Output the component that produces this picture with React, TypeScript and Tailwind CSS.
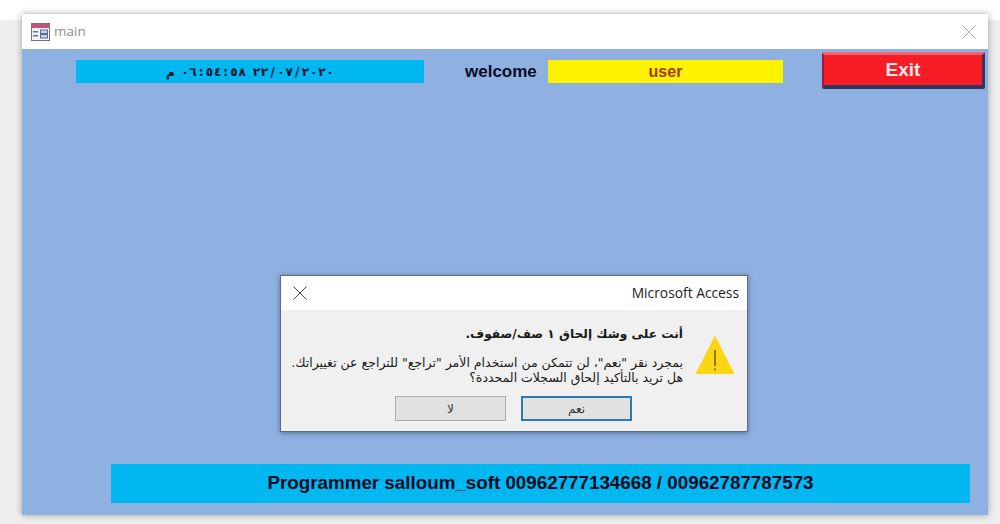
import React from "react";

const FormIcon = () => (
  <svg width="19" height="18" viewBox="0 0 19 18" className="shrink-0">
    <rect x="0.5" y="0.5" width="18" height="17" fill="#f0f2f8" stroke="#70727f" />
    <rect x="1" y="1" width="17" height="4" fill="#c2537c" />
    <rect x="2" y="8" width="5" height="1.5" fill="#68789a" />
    <rect x="2" y="12" width="5" height="1.5" fill="#68789a" />
    <rect x="9.5" y="7" width="7" height="3.5" fill="#c3d3ea" stroke="#5a6a90" strokeWidth="1" />
    <rect x="9.5" y="11.5" width="7" height="3.5" fill="#c3d3ea" stroke="#5a6a90" strokeWidth="1" />
  </svg>
);

const X = ({ size, color }: { size: number; color: string }) => (
  <svg width={size} height={size} viewBox="0 0 14 14" className="shrink-0">
    <path d="M0.5 0.5 L13.5 13.5 M13.5 0.5 L0.5 13.5" stroke={color} strokeWidth="1" fill="none" />
  </svg>
);

const Warning = () => (
  <svg width="40" height="40" viewBox="0 0 40 40" className="shrink-0">
    <path d="M20 0.5 L39.5 39 L0.5 39 Z" fill="#fcd612" />
    <path d="M20 15 L20 31 M20 33.5 L20 35.5" stroke="#4a3d10" strokeWidth="1.2" />
  </svg>
);

const Spaced = ({ text }: { text: string }) => (
  <span className="flex">
    {text.split("").map((c, i) => (
      <span key={i} className="w-[8.2px] text-center">
        {c}
      </span>
    ))}
  </span>
);

export default function App() {
  return (
    <div className="relative h-[524px] w-[1000px] overflow-hidden bg-[#eeeeee] font-['Liberation_Sans',sans-serif]">
      <div className="h-5 bg-white" />
      <div className="absolute left-[22px] top-[14px] flex h-[501px] w-[966px] flex-col shadow-[0_0_7px_rgba(0,0,0,0.35)]">
        <div className="flex h-[35px] shrink-0 items-center bg-white pl-[9px] pr-[12px]">
          <FormIcon />
          <span className="ml-[4px] font-['Open_Sans',sans-serif] text-[13.5px] text-[#909090]">main</span>
          <span className="ml-auto">
            <X size={14} color="#b0b0b0" />
          </span>
        </div>
        <div className="relative flex flex-1 flex-col bg-[#8fb1e1] pb-[12px] pl-[54px] pr-[3px] pt-[3px]">
          <div className="flex items-start">
            <div className="mt-[8px] flex h-[23px] w-[348px] items-center justify-center gap-[6px] bg-[#00b7f0] font-['DejaVu_Sans',sans-serif] text-[12px] font-bold text-[#101030]">
              <span>م</span>
              <Spaced text="٠٦:٥٤:٥٨" />
              <Spaced text="٢٢/٠٧/٢٠٢٠" />
            </div>
            <div className="ml-[41px] mt-[11px] w-[83px] text-[17px] font-bold leading-none text-[#0b0b25]">welcome</div>
            <div className="mt-[8px] flex h-[23px] w-[235px] items-center justify-center bg-[#fff200] text-[16px] font-bold text-[#a83a10]">
              user
            </div>
            <button className="ml-[39px] flex h-[37px] w-[163px] items-center justify-center rounded-[2px] border-t-[3px] border-l-2 border-r-[3px] border-b-[4px] border-t-[#f8636c] border-l-[#a01e38] border-r-[#38345e] border-b-[#2e3560] bg-[#f81c27] pt-[1px] text-[19px] font-bold text-[#fbeaea]">
              Exit
            </button>
          </div>
          <div className="mt-auto ml-[35px] mr-[15px] flex h-[39px] items-center justify-center bg-[#00b7f0] text-[18.8px] font-bold text-[#0b0b25]">
            Programmer salloum_soft 00962777134668 / 00962787787573
          </div>

          <div className="absolute left-[258px] top-[226px] flex h-[157px] w-[468px] flex-col border border-[#5d6c80] shadow-[0_1px_5px_rgba(30,40,70,0.5)]">
            <div className="flex h-[34px] shrink-0 items-center justify-between bg-white pl-[12px] pr-[8px]">
              <X size={14} color="#444444" />
              <span className="font-['Open_Sans',sans-serif] text-[13.8px] text-[#222]">Microsoft Access</span>
            </div>
            <div className="flex flex-1 flex-col bg-[#f0f0f0]">
              <div className="flex flex-1 justify-end">
                <div dir="rtl" className="mr-[12px] pt-[16px] font-['DejaVu_Sans',sans-serif] text-[#1a1a1a]">
                  <div className="text-[12.2px] font-bold leading-[17px]">أنت على وشك إلحاق ١ صف/صفوف.</div>
                  <div className="mt-[12px] whitespace-nowrap text-[12.5px] leading-[15px]">
                    <div>بمجرد نقر "نعم"، لن تتمكن من استخدام الأمر "تراجع" للتراجع عن تغييراتك.</div>
                    <div>هل تريد بالتأكيد إلحاق السجلات المحددة؟</div>
                  </div>
                </div>
                <div className="mr-[12px] pt-[25px]">
                  <Warning />
                </div>
              </div>
              <div className="flex justify-end gap-[15px] pb-[10px] pr-[115px]">
                <button className="order-2 h-[25px] w-[111px] border-2 border-[#2a7ab5] bg-[#e1e1e1] font-['DejaVu_Sans',sans-serif] text-[12px] text-[#333]">
                  نعم
                </button>
                <button className="order-1 h-[25px] w-[111px] border border-[#adadad] bg-[#e1e1e1] font-['DejaVu_Sans',sans-serif] text-[12px] text-[#333]">
                  لا
                </button>
              </div>
            </div>
          </div>
        </div>
      </div>
    </div>
  );
}
